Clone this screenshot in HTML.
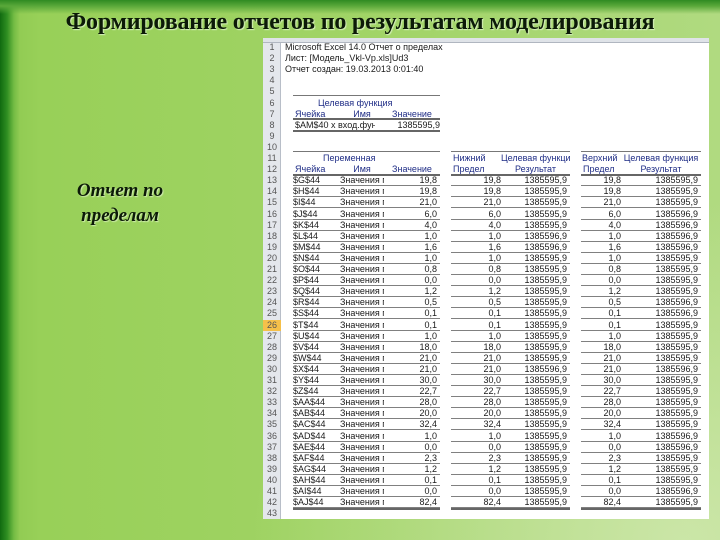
<!DOCTYPE html>
<html><head><meta charset="utf-8"><style>
*{margin:0;padding:0;box-sizing:border-box}
body{width:720px;height:540px;overflow:hidden;position:relative;font-family:"Liberation Sans",sans-serif;
background:linear-gradient(90deg,#106a10 0px,#2f8e22 7px,#74bc44 14px,#92cc54 20px,#98d058 40px,#a2d468 400px,#b0da80 720px);}
#top{position:absolute;left:0;top:0;width:720px;height:14px;background:linear-gradient(180deg,#2f8a22 0,#5aa83a 6px,rgba(150,206,88,0) 14px)}
#glow{position:absolute;left:0;top:0;width:720px;height:540px;background:radial-gradient(ellipse at 95% 100%,rgba(215,235,185,0.7),rgba(215,235,185,0) 45%)}
h1{position:absolute;left:0;top:9px;width:720px;text-align:center;font-family:"Liberation Serif",serif;font-weight:bold;font-size:24px;color:#0c1a08;text-shadow:1px 1px 1px #d8f0c0;letter-spacing:-0.2px}
.side{position:absolute;left:40px;width:160px;text-align:center;font-family:"Liberation Serif",serif;font-style:italic;font-weight:bold;font-size:19px;color:#0c1a08;text-shadow:1px 1px 1px #d0ecb0}
#sheet{position:absolute;left:263px;top:38px;width:446px;height:481px;background:#fff}
#colh{position:absolute;left:0;top:0;width:446px;height:5px;background:#dfe3e8;border-bottom:1px solid #b0b6c0}
#rn{position:absolute;left:0;top:5px;width:18px;height:476px;background:#e4e7ec;border-right:1px solid #b8bec8}
.r{position:absolute;left:0;width:446px;height:11.1px;font-size:9px;line-height:10.5px;color:#1a1a1a;white-space:nowrap}
.r span{position:absolute;top:0;height:11.1px;overflow:hidden}
.n{left:0;width:18px;text-align:center;color:#555}
.t{left:22px}
.c1{left:30px;width:47px}
.c2{left:77px;width:44px}
.c3{left:121px;width:56px;text-align:right}
.c4{left:188px;width:50px;text-align:right}
.c5{left:238px;width:69px;text-align:right}
.c6{left:318px;width:40px;text-align:right}
.c7{left:358px;width:80px;text-align:right}
.d .c1,.d .c2,.d .c3,.d .c4,.d .c5,.d .c6,.d .c7{border-bottom:1px solid #808080}
.d .c3,.d .c5,.d .c7{padding-right:3px}
.h{color:#1f2d86}
.ln{position:absolute;height:0;border-top:1px solid #777}
.tk{position:absolute;height:2px;background:#666}
</style></head><body>
<div id="top"></div><div id="glow"></div>
<h1>Формирование отчетов по результатам моделирования</h1>
<div class="side" style="top:180px">Отчет по</div>
<div class="side" style="top:205px">пределам</div>
<div id="sheet">
<div id="colh"></div><div id="rn"></div>
<div class="r" style="top:4px"><span class="n">1</span><span class="t">Microsoft Excel 14.0 Отчет о пределах</span></div>
<div class="r" style="top:15.1px"><span class="n">2</span><span class="t">Лист: [Модель_Vkl-Vp.xls]Ud3</span></div>
<div class="r" style="top:26.2px"><span class="n">3</span><span class="t">Отчет создан: 19.03.2013 0:01:40</span></div>
<div class="r" style="top:37.3px"><span class="n">4</span></div>
<div class="r" style="top:48.4px"><span class="n">5</span></div>
<div class="r h" style="top:59.5px"><span class="n">6</span><span style="left:55px">Целевая функция</span></div>
<div class="r h" style="top:70.6px"><span class="n">7</span><span class="c1" style="left:32px">Ячейка</span><span class="c2" style="text-align:center">Имя</span><span class="c3" style="text-align:center">Значение</span></div>
<div class="r" style="top:81.7px"><span class="n">8</span><span class="c1" style="left:32px;width:80px">$AM$40 x вход.функц</span><span class="c3">1385595,9</span></div>
<div class="r" style="top:92.8px"><span class="n">9</span></div>
<div class="r" style="top:103.9px"><span class="n">10</span></div>
<div class="r h" style="top:115px"><span class="n">11</span><span class="c2" style="left:60px;width:80px">Переменная</span><span class="c4" style="text-align:left;left:190px">Нижний</span><span class="c5" style="text-align:center">Целевая функция</span><span class="c6" style="text-align:left;left:319px">Верхний</span><span class="c7" style="text-align:center">Целевая функция</span></div>
<div class="r h" style="top:126.1px"><span class="n">12</span><span class="c1" style="left:32px">Ячейка</span><span class="c2" style="text-align:center">Имя</span><span class="c3" style="text-align:center">Значение</span><span class="c4" style="text-align:left;left:190px">Предел</span><span class="c5" style="text-align:center">Результат</span><span class="c6" style="text-align:left;left:320px">Предел</span><span class="c7" style="text-align:center">Результат</span></div>
<div class="ln" style="left:30px;width:147px;top:57px"></div>
<div class="tk" style="left:30px;width:147px;top:80px"></div>
<div class="tk" style="left:30px;width:147px;top:91.5px"></div>
<div class="ln" style="left:30px;width:147px;top:113px"></div>
<div class="ln" style="left:188px;width:119px;top:113px"></div>
<div class="ln" style="left:318px;width:120px;top:113px"></div>
<div class="tk" style="left:30px;width:147px;top:136px"></div>
<div class="tk" style="left:188px;width:119px;top:136px"></div>
<div class="tk" style="left:318px;width:120px;top:136px"></div>
<div class="r d" style="top:137.2px"><span class="n">13</span><span class="c1">$G$44</span><span class="c2">Значения пер</span><span class="c3">19,8</span><span class="c4">19,8</span><span class="c5">1385595,9</span><span class="c6">19,8</span><span class="c7">1385595,9</span></div>
<div class="r d" style="top:148.3px"><span class="n">14</span><span class="c1">$H$44</span><span class="c2">Значения пер</span><span class="c3">19,8</span><span class="c4">19,8</span><span class="c5">1385595,9</span><span class="c6">19,8</span><span class="c7">1385595,9</span></div>
<div class="r d" style="top:159.4px"><span class="n">15</span><span class="c1">$I$44</span><span class="c2">Значения пер</span><span class="c3">21,0</span><span class="c4">21,0</span><span class="c5">1385595,9</span><span class="c6">21,0</span><span class="c7">1385595,9</span></div>
<div class="r d" style="top:170.5px"><span class="n">16</span><span class="c1">$J$44</span><span class="c2">Значения пер</span><span class="c3">6,0</span><span class="c4">6,0</span><span class="c5">1385595,9</span><span class="c6">6,0</span><span class="c7">1385596,9</span></div>
<div class="r d" style="top:181.6px"><span class="n">17</span><span class="c1">$K$44</span><span class="c2">Значения пер</span><span class="c3">4,0</span><span class="c4">4,0</span><span class="c5">1385595,9</span><span class="c6">4,0</span><span class="c7">1385596,9</span></div>
<div class="r d" style="top:192.7px"><span class="n">18</span><span class="c1">$L$44</span><span class="c2">Значения пер</span><span class="c3">1,0</span><span class="c4">1,0</span><span class="c5">1385596,9</span><span class="c6">1,0</span><span class="c7">1385596,9</span></div>
<div class="r d" style="top:203.8px"><span class="n">19</span><span class="c1">$M$44</span><span class="c2">Значения пер</span><span class="c3">1,6</span><span class="c4">1,6</span><span class="c5">1385596,9</span><span class="c6">1,6</span><span class="c7">1385596,9</span></div>
<div class="r d" style="top:214.9px"><span class="n">20</span><span class="c1">$N$44</span><span class="c2">Значения пер</span><span class="c3">1,0</span><span class="c4">1,0</span><span class="c5">1385595,9</span><span class="c6">1,0</span><span class="c7">1385595,9</span></div>
<div class="r d" style="top:226px"><span class="n">21</span><span class="c1">$O$44</span><span class="c2">Значения пер</span><span class="c3">0,8</span><span class="c4">0,8</span><span class="c5">1385595,9</span><span class="c6">0,8</span><span class="c7">1385595,9</span></div>
<div class="r d" style="top:237.1px"><span class="n">22</span><span class="c1">$P$44</span><span class="c2">Значения пер</span><span class="c3">0,0</span><span class="c4">0,0</span><span class="c5">1385595,9</span><span class="c6">0,0</span><span class="c7">1385595,9</span></div>
<div class="r d" style="top:248.2px"><span class="n">23</span><span class="c1">$Q$44</span><span class="c2">Значения пер</span><span class="c3">1,2</span><span class="c4">1,2</span><span class="c5">1385595,9</span><span class="c6">1,2</span><span class="c7">1385595,9</span></div>
<div class="r d" style="top:259.3px"><span class="n">24</span><span class="c1">$R$44</span><span class="c2">Значения пер</span><span class="c3">0,5</span><span class="c4">0,5</span><span class="c5">1385595,9</span><span class="c6">0,5</span><span class="c7">1385596,9</span></div>
<div class="r d" style="top:270.4px"><span class="n">25</span><span class="c1">$S$44</span><span class="c2">Значения пер</span><span class="c3">0,1</span><span class="c4">0,1</span><span class="c5">1385595,9</span><span class="c6">0,1</span><span class="c7">1385596,9</span></div>
<div class="r d" style="top:281.5px"><span class="n" style="background:#f5c04a">26</span><span class="c1">$T$44</span><span class="c2">Значения пер</span><span class="c3">0,1</span><span class="c4">0,1</span><span class="c5">1385595,9</span><span class="c6">0,1</span><span class="c7">1385595,9</span></div>
<div class="r d" style="top:292.6px"><span class="n">27</span><span class="c1">$U$44</span><span class="c2">Значения пер</span><span class="c3">1,0</span><span class="c4">1,0</span><span class="c5">1385595,9</span><span class="c6">1,0</span><span class="c7">1385595,9</span></div>
<div class="r d" style="top:303.7px"><span class="n">28</span><span class="c1">$V$44</span><span class="c2">Значения пер</span><span class="c3">18,0</span><span class="c4">18,0</span><span class="c5">1385595,9</span><span class="c6">18,0</span><span class="c7">1385595,9</span></div>
<div class="r d" style="top:314.8px"><span class="n">29</span><span class="c1">$W$44</span><span class="c2">Значения пер</span><span class="c3">21,0</span><span class="c4">21,0</span><span class="c5">1385595,9</span><span class="c6">21,0</span><span class="c7">1385595,9</span></div>
<div class="r d" style="top:325.9px"><span class="n">30</span><span class="c1">$X$44</span><span class="c2">Значения пер</span><span class="c3">21,0</span><span class="c4">21,0</span><span class="c5">1385596,9</span><span class="c6">21,0</span><span class="c7">1385596,9</span></div>
<div class="r d" style="top:337px"><span class="n">31</span><span class="c1">$Y$44</span><span class="c2">Значения пер</span><span class="c3">30,0</span><span class="c4">30,0</span><span class="c5">1385595,9</span><span class="c6">30,0</span><span class="c7">1385595,9</span></div>
<div class="r d" style="top:348.1px"><span class="n">32</span><span class="c1">$Z$44</span><span class="c2">Значения пер</span><span class="c3">22,7</span><span class="c4">22,7</span><span class="c5">1385595,9</span><span class="c6">22,7</span><span class="c7">1385595,9</span></div>
<div class="r d" style="top:359.2px"><span class="n">33</span><span class="c1">$AA$44</span><span class="c2">Значения пер</span><span class="c3">28,0</span><span class="c4">28,0</span><span class="c5">1385595,9</span><span class="c6">28,0</span><span class="c7">1385595,9</span></div>
<div class="r d" style="top:370.3px"><span class="n">34</span><span class="c1">$AB$44</span><span class="c2">Значения пер</span><span class="c3">20,0</span><span class="c4">20,0</span><span class="c5">1385595,9</span><span class="c6">20,0</span><span class="c7">1385595,9</span></div>
<div class="r d" style="top:381.4px"><span class="n">35</span><span class="c1">$AC$44</span><span class="c2">Значения пер</span><span class="c3">32,4</span><span class="c4">32,4</span><span class="c5">1385595,9</span><span class="c6">32,4</span><span class="c7">1385595,9</span></div>
<div class="r d" style="top:392.5px"><span class="n">36</span><span class="c1">$AD$44</span><span class="c2">Значения пер</span><span class="c3">1,0</span><span class="c4">1,0</span><span class="c5">1385595,9</span><span class="c6">1,0</span><span class="c7">1385596,9</span></div>
<div class="r d" style="top:403.6px"><span class="n">37</span><span class="c1">$AE$44</span><span class="c2">Значения пер</span><span class="c3">0,0</span><span class="c4">0,0</span><span class="c5">1385595,9</span><span class="c6">0,0</span><span class="c7">1385596,9</span></div>
<div class="r d" style="top:414.7px"><span class="n">38</span><span class="c1">$AF$44</span><span class="c2">Значения пер</span><span class="c3">2,3</span><span class="c4">2,3</span><span class="c5">1385595,9</span><span class="c6">2,3</span><span class="c7">1385595,9</span></div>
<div class="r d" style="top:425.8px"><span class="n">39</span><span class="c1">$AG$44</span><span class="c2">Значения пер</span><span class="c3">1,2</span><span class="c4">1,2</span><span class="c5">1385595,9</span><span class="c6">1,2</span><span class="c7">1385595,9</span></div>
<div class="r d" style="top:436.9px"><span class="n">40</span><span class="c1">$AH$44</span><span class="c2">Значения пер</span><span class="c3">0,1</span><span class="c4">0,1</span><span class="c5">1385595,9</span><span class="c6">0,1</span><span class="c7">1385595,9</span></div>
<div class="r d" style="top:448px"><span class="n">41</span><span class="c1">$AI$44</span><span class="c2">Значения пер</span><span class="c3">0,0</span><span class="c4">0,0</span><span class="c5">1385595,9</span><span class="c6">0,0</span><span class="c7">1385596,9</span></div>
<div class="r d" style="top:459.1px"><span class="n">42</span><span class="c1">$AJ$44</span><span class="c2">Значения пер</span><span class="c3">82,4</span><span class="c4">82,4</span><span class="c5">1385595,9</span><span class="c6">82,4</span><span class="c7">1385595,9</span></div>
<div class="tk" style="left:30px;width:147px;top:469.5px"></div>
<div class="tk" style="left:188px;width:119px;top:469.5px"></div>
<div class="tk" style="left:318px;width:120px;top:469.5px"></div>
<div class="r" style="top:470.2px"><span class="n">43</span></div>
</div>
</body></html>
